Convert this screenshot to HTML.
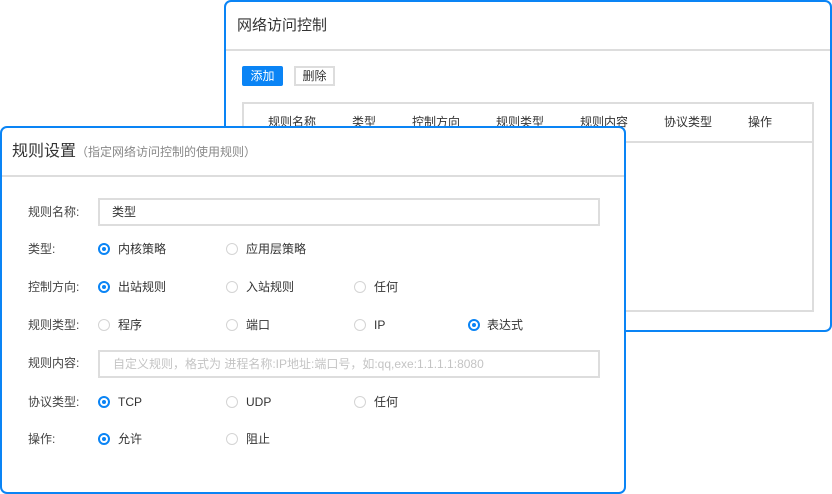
<!DOCTYPE html>
<html><head><meta charset="utf-8"><style>
*{margin:0;padding:0;box-sizing:border-box}
body{width:832px;height:494px;background:#fff;position:relative;overflow:hidden;font-family:"Liberation Sans","Noto Sans CJK SC",sans-serif;color:#333}
.p{position:absolute;border:2px solid #0a84f5;border-radius:7px;background:#fff}
.a{position:absolute;white-space:nowrap;line-height:1}
.r{position:absolute;width:12px;height:12px;border-radius:50%;border:1px solid #d4d4d4;background:#fff}
.r.on{border:2px solid #0a84f5}
.r.on::after{content:"";position:absolute;left:2px;top:2px;width:4px;height:4px;border-radius:50%;background:#0a84f5}
.t{font-size:12px;color:#333;line-height:12px}
.lbl{font-size:12px;color:#444;line-height:12px}
</style></head><body>
<div class="p" style="left:224px;top:0;width:608px;height:332px">
 <div class="a" style="left:11px;top:16px;font-size:15px;color:#333">网络访问控制</div>
 <div class="a" style="left:0;top:47px;width:604px;height:2px;background:#ddd"></div>
 <div class="a" style="left:16px;top:64px;width:41px;height:20px;background:#0a84f5;border-radius:2px;color:#fff;font-size:12px;text-align:center;line-height:20px">添加</div>
 <div class="a" style="left:68px;top:64px;width:41px;height:20px;border:2px solid #ddd;color:#333;font-size:12px;text-align:center;line-height:16px">删除</div>
 <div class="a" style="left:16px;top:100px;width:572px;height:210px;border:2px solid #ddd"></div>
 <div class="a" style="left:16px;top:139px;width:572px;height:2px;background:#ddd"></div>
 <div class="a t" style="left:42px;top:114px">规则名称</div>
 <div class="a t" style="left:126px;top:114px">类型</div>
 <div class="a t" style="left:186px;top:114px">控制方向</div>
 <div class="a t" style="left:270px;top:114px">规则类型</div>
 <div class="a t" style="left:354px;top:114px">规则内容</div>
 <div class="a t" style="left:438px;top:114px">协议类型</div>
 <div class="a t" style="left:522px;top:114px">操作</div>
</div>
<div class="p" style="left:0;top:126px;width:626px;height:368px">
 <div class="a" style="left:10px;top:16px;font-size:16px;color:#333">规则设置<span style="font-size:12px;color:#888">（指定网络访问控制的使用规则）</span></div>
 <div class="a" style="left:0;top:47px;width:622px;height:2px;background:#ddd"></div>
</div>
<div class="a lbl" style="left:28px;top:206px">规则名称:</div>
<div class="a" style="left:98px;top:198px;width:502px;height:28px;border:2px solid #ddd;font-size:12px;line-height:24px;padding-left:12px">类型</div>
<div class="a lbl" style="left:28px;top:243px">类型:</div>
<div class="a lbl" style="left:28px;top:281px">控制方向:</div>
<div class="a lbl" style="left:28px;top:319px">规则类型:</div>
<div class="a lbl" style="left:28px;top:357px">规则内容:</div>
<div class="a" style="left:98px;top:350px;width:502px;height:28px;border:2px solid #ddd;font-size:12px;line-height:24px;padding-left:13px;color:#c4c4c4">自定义规则，格式为 进程名称:IP地址:端口号，如:qq,exe:1.1.1.1:8080</div>
<div class="a lbl" style="left:28px;top:396px">协议类型:</div>
<div class="a lbl" style="left:28px;top:433px">操作:</div>

<div class="r on" style="left:98px;top:243px"></div><div class="a t" style="left:118px;top:243px">内核策略</div>
<div class="r" style="left:226px;top:243px"></div><div class="a t" style="left:246px;top:243px">应用层策略</div>

<div class="r on" style="left:98px;top:281px"></div><div class="a t" style="left:118px;top:281px">出站规则</div>
<div class="r" style="left:226px;top:281px"></div><div class="a t" style="left:246px;top:281px">入站规则</div>
<div class="r" style="left:354px;top:281px"></div><div class="a t" style="left:374px;top:281px">任何</div>

<div class="r" style="left:98px;top:319px"></div><div class="a t" style="left:118px;top:319px">程序</div>
<div class="r" style="left:226px;top:319px"></div><div class="a t" style="left:246px;top:319px">端口</div>
<div class="r" style="left:354px;top:319px"></div><div class="a t" style="left:374px;top:319px">IP</div>
<div class="r on" style="left:468px;top:319px"></div><div class="a t" style="left:487px;top:319px">表达式</div>

<div class="r on" style="left:98px;top:396px"></div><div class="a t" style="left:118px;top:396px">TCP</div>
<div class="r" style="left:226px;top:396px"></div><div class="a t" style="left:246px;top:396px">UDP</div>
<div class="r" style="left:354px;top:396px"></div><div class="a t" style="left:374px;top:396px">任何</div>

<div class="r on" style="left:98px;top:433px"></div><div class="a t" style="left:118px;top:433px">允许</div>
<div class="r" style="left:226px;top:433px"></div><div class="a t" style="left:246px;top:433px">阻止</div>
</body></html>
